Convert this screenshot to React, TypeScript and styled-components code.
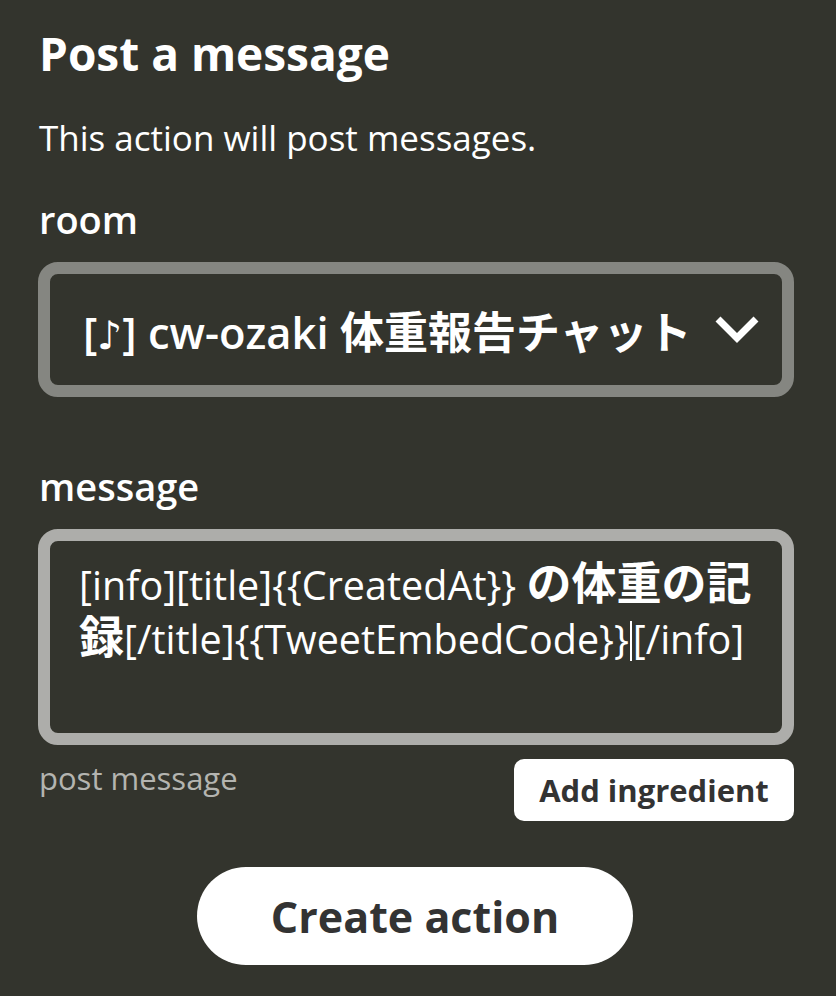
import React from 'react'
import styled, { createGlobalStyle } from 'styled-components'

const GlobalStyle = createGlobalStyle`
  html, body {
    margin: 0;
    padding: 0;
    background: #33342d;
  }
  body {
    font-family: "Open Sans", "Noto Sans CJK JP", sans-serif;
    font-variant-ligatures: none;
    color: #ffffff;
  }
`

const Page = styled.div`
  width: 836px;
  height: 996px;
  box-sizing: border-box;
  padding: 21px 42px 0 38px;
  display: flex;
  flex-direction: column;
`

const Title = styled.h1`
  margin: 0 0 0 1px;
  font-size: 46px;
  line-height: 64px;
  font-weight: 700;
`

const Subtitle = styled.p`
  margin: 33px 0 0 1px;
  font-size: 35px;
  line-height: 40px;
  font-weight: 400;
`

const Label = styled.div<{ $gap: number }>`
  margin: ${(p) => p.$gap}px 0 0 1px;
  font-size: 38px;
  line-height: 44px;
  font-weight: 600;
`

const SelectBox = styled.div`
  margin-top: 21px;
  height: 135px;
  box-sizing: border-box;
  border: 12px solid #858681;
  border-radius: 20px;
  display: flex;
  align-items: center;
  justify-content: space-between;
  padding: 0 22px 0 33px;
`

const SelectText = styled.span`
  font-size: 43.5px;
  font-weight: 600;
  white-space: nowrap;
`

const SelectCjk = styled.span`
  font-weight: 700;
  font-size: 44px;
`

const Note = styled.span`
  font-family: "DejaVu Sans", sans-serif;
  font-weight: 400;
  font-size: 0.9em;
`

const Chevron = styled.svg`
  width: 46px;
  height: 30px;
  flex: none;
`

const TextArea = styled.div`
  margin-top: 21px;
  height: 216px;
  box-sizing: border-box;
  border: 12px solid #adadaa;
  border-radius: 20px;
  padding: 16px 0 0 29px;
  font-size: 39.5px;
  line-height: 51px;
  font-weight: 400;
  white-space: nowrap;
`

const Bold = styled.span`
  font-weight: 700;
  font-size: 45px;
`

const Caret = styled.span`
  display: inline-block;
  width: 2px;
  height: 40px;
  margin: 0 1px -7px;
  background: #ffffff;
`

const HelpRow = styled.div`
  margin-top: 14px;
  display: flex;
  justify-content: space-between;
  align-items: flex-start;
`

const Help = styled.span`
  margin: 1px 0 0 1px;
  font-size: 31px;
  line-height: 36px;
  color: #b4b4b0;
`

const SmallButton = styled.button`
  width: 280px;
  height: 62px;
  border: none;
  border-radius: 10px;
  background: #ffffff;
  color: #333333;
  font-family: inherit;
  font-size: 31px;
  font-weight: 700;
  padding: 0;
`

const MainButton = styled.button`
  align-self: center;
  margin: 46px 0 0 0;
  width: 436px;
  height: 98px;
  border: none;
  border-radius: 49px;
  background: #ffffff;
  color: #333333;
  font-family: inherit;
  font-size: 43px;
  font-weight: 700;
  padding: 0;
  position: relative;
  left: -1px;
`

export default function App() {
  return (
    <>
      <GlobalStyle />
      <Page>
        <Title>Post a message</Title>
        <Subtitle>This action will post messages.</Subtitle>
        <Label $gap={39}>room</Label>
        <SelectBox>
          <SelectText>
            [<Note>♪</Note>] cw-ozaki <SelectCjk>体重報告チャット</SelectCjk>
          </SelectText>
          <Chevron viewBox="0 0 46 30">
            <path d="M4 4 L23 23 L42 4" fill="none" stroke="#ffffff" strokeWidth="7" />
          </Chevron>
        </SelectBox>
        <Label $gap={67}>message</Label>
        <TextArea>
          [info][title]{'{{CreatedAt}}'} <Bold>の体重の記</Bold>
          <br />
          <Bold>録</Bold>[/title]{'{{TweetEmbedCode}}'}
          <Caret />
          [/info]
        </TextArea>
        <HelpRow>
          <Help>post message</Help>
          <SmallButton>Add ingredient</SmallButton>
        </HelpRow>
        <MainButton>Create action</MainButton>
      </Page>
    </>
  )
}
